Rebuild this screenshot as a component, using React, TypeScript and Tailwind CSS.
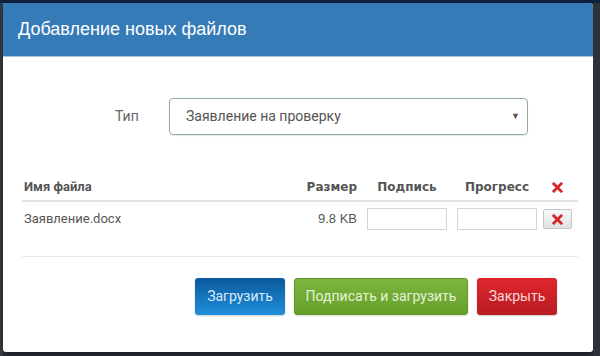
import React from 'react';

const RedX = ({ size = 12 }: { size?: number }) => (
  <svg width={size} height={size} viewBox="0 0 12 12">
    <path d="M2 2 L10 10 M10 2 L2 10" stroke="#d7262c" strokeWidth="3" strokeLinecap="square" />
  </svg>
);

const App: React.FC = () => {
  return (
    <div className="w-[600px] h-[356px] bg-[#2a3038] overflow-hidden flex flex-col" style={{ fontFamily: '"Liberation Sans", Arial, sans-serif' }}>
      {/* dimmed page strip behind the overlay */}
      <div className="h-[3px] bg-[#0f2340]" />

      <div className="flex flex-1">
        <div className="w-[3px] bg-[#3a3f46]" />

        {/* Modal */}
        <div className="w-[590px] h-[349px] bg-white rounded-tr-[4px] rounded-b-[3px] overflow-hidden flex flex-col shadow-[0_2px_8px_rgba(0,0,0,0.5)]">
          <div className="h-[54px] bg-[#357bb8] border-b border-[#a9c6de] flex items-center pl-[15px]">
            <h1 className="text-[18px] text-white">Добавление новых файлов</h1>
          </div>

          <div className="flex flex-col pt-[41px]">
            {/* Type select */}
            <div className="flex items-center">
              <span className="ml-[112px] w-[25px] text-[14px] text-[#666]" style={{ fontFamily: 'Roboto, "Liberation Sans", sans-serif' }}>Тип</span>
              <div className="ml-[29px] w-[359px] h-[37px] border border-[#8fae95] rounded-[4px] flex items-center justify-between pl-[16px] pr-[7px] shadow-[0_1px_1px_rgba(0,0,0,0.08)]">
                <span className="text-[14px] text-[#555]" style={{ fontFamily: 'Roboto, "Liberation Sans", sans-serif' }}>Заявление на проверку</span>
                <span className="text-[9px] text-[#555]">▼</span>
              </div>
            </div>

            {/* Files table */}
            <div className="ml-[19px] w-[556px] mt-[39px]">
              <div className="flex items-center h-[28px] border-b-2 border-[#e2e2e2] text-[13px] font-bold text-[#555]" style={{ fontFamily: '"DejaVu Sans", Verdana, sans-serif' }}>
                <span className="w-[275px] pl-[2px] text-[13px]" style={{ fontFamily: 'Roboto, sans-serif' }}>Имя файла</span>
                <span className="w-[60px] text-right text-[12px]">Размер</span>
                <span className="ml-[10px] w-[80px] text-center text-[12px]">Подпись</span>
                <span className="ml-[10px] w-[80px] text-center text-[12px]">Прогресс</span>
                <span className="ml-[6px] w-[29px] flex justify-center"><RedX size={11} /></span>
              </div>
              <div className="flex items-center h-[34px] text-[13px] text-[#555]" style={{ fontFamily: 'Roboto, sans-serif' }}>
                <span className="w-[275px] pl-[2px]">Заявление.docx</span>
                <span className="w-[60px] text-right" style={{ fontFamily: '"Liberation Sans", sans-serif' }}>9.8 KB</span>
                <div className="ml-[10px] w-[80px] h-[22px] border border-[#d6d6d6]" />
                <div className="ml-[10px] w-[80px] h-[22px] border border-[#d6d6d6]" />
                <button className="ml-[6px] w-[29px] h-[20px] border border-[#c4c4c4] rounded-[2px] bg-gradient-to-b from-[#f8f8f8] to-[#e2e2e2] flex items-center justify-center">
                  <RedX size={11} />
                </button>
              </div>
              <div className="h-[21px] border-b border-[#e8e8e8]" />
            </div>

            {/* Actions */}
            <div className="flex justify-end gap-[9px] pr-[36px] mt-[21px] text-[14px]" style={{ fontFamily: 'Roboto, "Liberation Sans", sans-serif' }}>
              <button className="w-[90px] h-[37px] rounded-[3px] bg-gradient-to-b from-[#0b5a9c] to-[#1f8fdc] text-[#dbe9f7] shadow-[0_1px_2px_rgba(0,0,0,0.2)]">Загрузить</button>
              <button className="w-[174px] h-[37px] rounded-[3px] bg-gradient-to-b from-[#7db53d] to-[#66a02b] border border-[#5f9428] text-[#e6f2d6] shadow-[0_1px_2px_rgba(0,0,0,0.15)]">Подписать и загрузить</button>
              <button className="w-[80px] h-[37px] rounded-[3px] bg-gradient-to-b from-[#e0262d] to-[#b71c22] text-[#f8d8d8] shadow-[0_1px_2px_rgba(0,0,0,0.2)]">Закрыть</button>
            </div>
          </div>
        </div>

        <div className="flex-1 bg-[#2e3238]" />
      </div>
    </div>
  );
};

export default App;
